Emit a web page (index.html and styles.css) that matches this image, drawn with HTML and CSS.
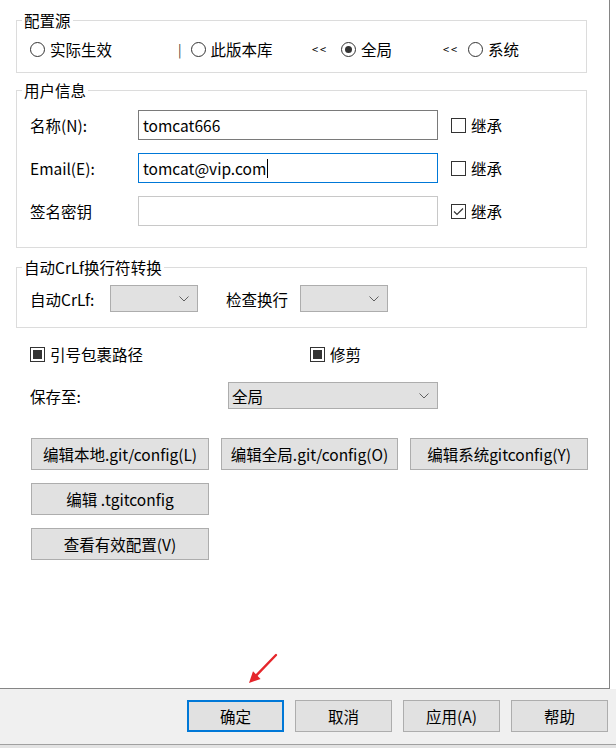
FILE: index.html
```html
<!DOCTYPE html>
<html lang="zh-CN">
<head>
  <meta charset="UTF-8" />
  <title>设置 - Git</title>
  <link rel="stylesheet" href="styles.css">
</head>
<body>
  <div class="dialog">
    <div class="panel">
      <fieldset class="group group-source">
        <legend>配置源</legend>
        <div class="source-row">
          <div class="cell">
            <label class="radio"><span class="circle"></span>实际生效</label>
          </div>
          <div class="cell">
            <span class="sep">|</span>
            <label class="radio"><span class="circle"></span>此版本库</label>
          </div>
          <div class="cell">
            <span class="prev">&lt;&lt;</span>
            <label class="radio checked"><span class="circle"></span>全局</label>
          </div>
          <div class="cell">
            <span class="prev">&lt;&lt;</span>
            <label class="radio"><span class="circle"></span>系统</label>
          </div>
        </div>
      </fieldset>

      <fieldset class="group group-user">
        <legend>用户信息</legend>
        <div class="user-grid">
          <span class="label">名称(N):</span>
          <div class="textbox hover">tomcat666</div>
          <label class="check"><span class="box"></span>继承</label>

          <span class="label">Email(E):</span>
          <div class="textbox focus">tomcat@vip.com<span class="caret"></span></div>
          <label class="check"><span class="box"></span>继承</label>

          <span class="label">签名密钥</span>
          <div class="textbox"></div>
          <label class="check">
            <span class="box">
              <svg width="13" height="13" viewBox="0 0 13 13"><polyline points="2,6.5 5,9.5 11,3.5" fill="none" stroke="#333" stroke-width="1.2"/></svg>
            </span>继承
          </label>
        </div>
      </fieldset>

      <fieldset class="group group-crlf">
        <legend>自动CrLf换行符转换</legend>
        <div class="crlf-row">
          <span class="crlf-label">自动CrLf:</span>
          <div class="select small"><span></span><svg class="arrow" width="10" height="6" viewBox="0 0 10 6"><polyline points="0.5,0.5 5,5 9.5,0.5" fill="none" stroke="#606060"/></svg></div>
          <span class="crlf-label second">检查换行</span>
          <div class="select small"><span></span><svg class="arrow" width="10" height="6" viewBox="0 0 10 6"><polyline points="0.5,0.5 5,5 9.5,0.5" fill="none" stroke="#606060"/></svg></div>
        </div>
      </fieldset>

      <div class="options">
        <div class="option-row">
          <label class="check wide"><span class="box mixed"><span class="fill"></span></span>引号包裹路径</label>
          <label class="check"><span class="box mixed"><span class="fill"></span></span>修剪</label>
        </div>

        <div class="save-row">
          <span class="save-label">保存至:</span>
          <div class="select large"><span>全局</span><svg class="arrow" width="10" height="6" viewBox="0 0 10 6"><polyline points="0.5,0.5 5,5 9.5,0.5" fill="none" stroke="#606060"/></svg></div>
        </div>

        <div class="edit-buttons">
          <button class="btn">编辑本地.git/config(L)</button>
          <button class="btn">编辑全局.git/config(O)</button>
          <button class="btn">编辑系统gitconfig(Y)</button>
          <button class="btn">编辑 .tgitconfig</button>
          <span></span><span></span>
          <button class="btn">查看有效配置(V)</button>
        </div>
      </div>
    </div>

    <div class="footer">
      <button class="btn dlg default">确定</button>
      <button class="btn dlg">取消</button>
      <button class="btn dlg">应用(A)</button>
      <button class="btn dlg">帮助</button>
    </div>

    <!-- 标注箭头 -->
    <svg class="mark" width="40" height="40" viewBox="0 0 40 40">
      <line x1="32" y1="5" x2="12.6" y2="25.1" stroke="#e5262b" stroke-width="2.4" stroke-linecap="round"/>
      <polygon points="5,33 16.6,29 9,21.2" fill="#e5262b"/>
    </svg>
  </div>
</body>
</html>
```

FILE: styles.css
```css
body {
  margin: 0;
  background-color: #e3e3e3;
  font-family: "Noto Sans CJK SC", "Noto Sans", sans-serif;
  font-size: 15.5px;
  color: #000;
}

.dialog {
  position: relative;
  width: 616px;
  background-color: #fff;
}

.panel {
  box-sizing: border-box;
  width: 610px;
  height: 689px;
  padding-top: 10px;
  background-color: #fff;
  border-right: 1px solid #858585;
  border-bottom: 1px solid #858585;
}

/* 分组框 */
.group {
  box-sizing: border-box;
  width: 571px;
  margin: 0 0 0 16px;
  padding: 0 5px;
  border: 1px solid #dcdcdc;
  min-inline-size: 0;
}

.group legend {
  padding: 0 2px;
  line-height: 20px;
  height: 20px;
}

.group-source {
  padding-top: 8px;
  padding-bottom: 12px;
}

.group-user {
  margin-top: 7px;
  padding-top: 10px;
  padding-bottom: 21px;
}

.group-crlf {
  margin-top: 9px;
  padding-top: 8px;
  padding-bottom: 15px;
}

/* 配置源 */
.source-row {
  display: grid;
  grid-template-columns: 148px 134px 131px auto;
  padding-left: 8px;
  height: 22px;
  align-items: center;
}

.cell {
  display: flex;
  align-items: center;
}

.sep {
  font-size: 13px;
  color: #333;
  margin-right: 9px;
}

.prev {
  font-size: 11px;
  letter-spacing: 2px;
  width: 29px;
}

.cell:last-child .prev {
  width: 25px;
}

.radio {
  display: flex;
  align-items: center;
  gap: 5px;
}

.circle {
  flex: none;
  box-sizing: border-box;
  width: 15px;
  height: 15px;
  border: 1px solid #333;
  border-radius: 50%;
  position: relative;
}

.radio.checked .circle::after {
  content: "";
  position: absolute;
  left: 3px;
  top: 3px;
  width: 7px;
  height: 7px;
  border-radius: 50%;
  background-color: #333;
}

/* 用户信息 */
.user-grid {
  display: grid;
  grid-template-columns: 95px 300px auto;
  grid-auto-rows: 30px;
  row-gap: 13px;
  column-gap: 13px;
  padding-left: 8px;
  align-items: center;
}

.textbox {
  box-sizing: border-box;
  height: 30px;
  border: 1px solid #c8c8c8;
  padding: 0 4px;
  display: flex;
  align-items: center;
}

.textbox.hover {
  border-color: #7a7a7a;
}

.textbox.focus {
  border-color: #0078d7;
}

.caret {
  display: inline-block;
  width: 1px;
  height: 19px;
  background-color: #000;
  margin-left: 1px;
}

.check {
  display: flex;
  align-items: center;
  gap: 5px;
}

.box {
  flex: none;
  box-sizing: border-box;
  width: 15px;
  height: 15px;
  border: 1px solid #333;
  display: flex;
  align-items: center;
  justify-content: center;
}

.box.mixed .fill {
  width: 9px;
  height: 9px;
  background-color: #333;
}

/* 自动 CrLf */
.crlf-row {
  display: flex;
  align-items: center;
  padding-left: 8px;
}

.crlf-label {
  width: 80px;
}

.crlf-label.second {
  width: 74px;
  margin-left: 28px;
}

.select {
  box-sizing: border-box;
  height: 27px;
  background-color: #e1e1e1;
  border: 1px solid #adadad;
  display: flex;
  align-items: center;
  justify-content: space-between;
  padding: 0 8px 0 3px;
}

.select.small {
  width: 88px;
}

.select.large {
  width: 210px;
}

/* 其他选项 */
.options {
  padding-left: 30px;
}

.option-row {
  display: flex;
  align-items: center;
  height: 22px;
  margin-top: 15px;
}

.check.wide {
  width: 280px;
}

.save-row {
  display: flex;
  align-items: center;
  margin-top: 17px;
}

.save-label {
  width: 198px;
}

.edit-buttons {
  display: grid;
  grid-template-columns: 178px 177px 178px;
  grid-auto-rows: 32px;
  column-gap: 12px;
  row-gap: 13px;
  margin-top: 29px;
  margin-left: 1px;
}

.btn {
  box-sizing: border-box;
  height: 32px;
  background-color: #e1e1e1;
  border: 1px solid #adadad;
  font-family: inherit;
  font-size: 15.5px;
  color: #000;
  padding: 0;
  white-space: nowrap;
}

/* 底部按钮栏 */
.footer {
  box-sizing: border-box;
  height: 56px;
  background-color: #f0f0f0;
  border-bottom: 1px solid #a0a0a0;
  display: flex;
  justify-content: flex-end;
  gap: 11px;
  padding: 11px 8px 0 0;
}

.btn.dlg {
  width: 97px;
}

.btn.default {
  border: 2px solid #0078d7;
}

.mark {
  position: absolute;
  left: 244px;
  top: 650px;
  pointer-events: none;
}
```
